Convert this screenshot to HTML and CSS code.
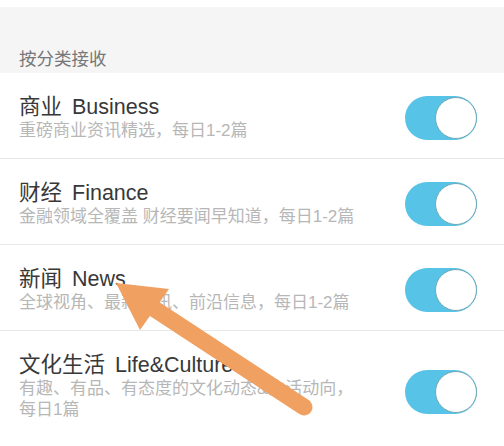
FILE: index.html
```html
<!DOCTYPE html>
<html lang="zh-CN">

<head>
  <meta charset="UTF-8">
  <meta name="viewport" content="width=device-width, initial-scale=1.0">
  <title>按分类接收</title>
  <link rel="stylesheet" href="styles.css">
</head>

<body>
  <div class="page">
    <div class="top-gap"></div>
    <div class="section-header">按分类接收</div>

    <div class="row">
      <div class="row-text">
        <div class="row-title">商业<span class="en">Business</span></div>
        <div class="row-sub">重磅商业资讯精选，每日1-2篇</div>
      </div>
      <div class="switch on"></div>
    </div>

    <div class="row">
      <div class="row-text">
        <div class="row-title">财经<span class="en">Finance</span></div>
        <div class="row-sub">金融领域全覆盖 财经要闻早知道，每日1-2篇</div>
      </div>
      <div class="switch on"></div>
    </div>

    <div class="row">
      <div class="row-text">
        <div class="row-title">新闻<span class="en">News</span></div>
        <div class="row-sub">全球视角、最新资讯、前沿信息，每日1-2篇</div>
      </div>
      <div class="switch on"></div>
    </div>

    <div class="row last">
      <div class="row-text">
        <div class="row-title">文化生活<span class="en">Life&amp;Culture</span></div>
        <div class="row-sub">有趣、有品、有态度的文化动态&amp;生活动向，<br>每日1篇</div>
      </div>
      <div class="switch on"></div>
    </div>

    <!-- 标注箭头 -->
    <svg class="arrow" width="504" height="446" viewBox="0 0 504 446">
      <line x1="150" y1="306" x2="304" y2="407" stroke="#f0a161" stroke-width="17" stroke-linecap="round" />
      <polygon points="116,283 169,289 140,330" fill="#f0a161" />
    </svg>
  </div>
</body>

</html>
```

FILE: styles.css
```css
body {
  margin: 0;
  background-color: #fff;
  font-family: "Liberation Sans", "Noto Sans CJK SC", sans-serif;
}

.page {
  position: relative;
  width: 504px;
  height: 446px;
  overflow: hidden;
}

.top-gap {
  height: 7px;
}

.section-header {
  height: 66px;
  box-sizing: border-box;
  display: flex;
  align-items: flex-end;
  padding: 0 0 2px 19px;
  background-color: #f5f5f5;
  font-size: 17.5px;
  line-height: 24px;
  color: #777;
}

.row {
  display: flex;
  align-items: center;
  padding: 21px 27px 17px 19px;
  border-bottom: 1px solid #e8e8e8;
}

.row.last {
  border-bottom: none;
}

.row.last .switch {
  margin-top: 12px;
}

.row-text {
  flex: 1;
  white-space: nowrap;
}

.row-title {
  font-size: 21.5px;
  line-height: 26px;
  color: #383838;
}

.row-title .en {
  margin-left: 10px;
}

.row-sub {
  font-size: 17px;
  line-height: 21px;
  color: #b7b7b7;
}

.switch {
  position: relative;
  flex-shrink: 0;
  width: 72px;
  height: 44px;
  border-radius: 22px;
  background-color: #ddd;
}

.switch.on {
  background-color: #57c3e6;
}

.switch::after {
  content: "";
  position: absolute;
  top: 1px;
  right: 0;
  width: 42px;
  height: 42px;
  box-sizing: border-box;
  border-radius: 50%;
  background-color: #fff;
  border: 1.5px solid #6fa8b6;
}

.arrow {
  position: absolute;
  left: 0;
  top: 0;
  pointer-events: none;
}
```
